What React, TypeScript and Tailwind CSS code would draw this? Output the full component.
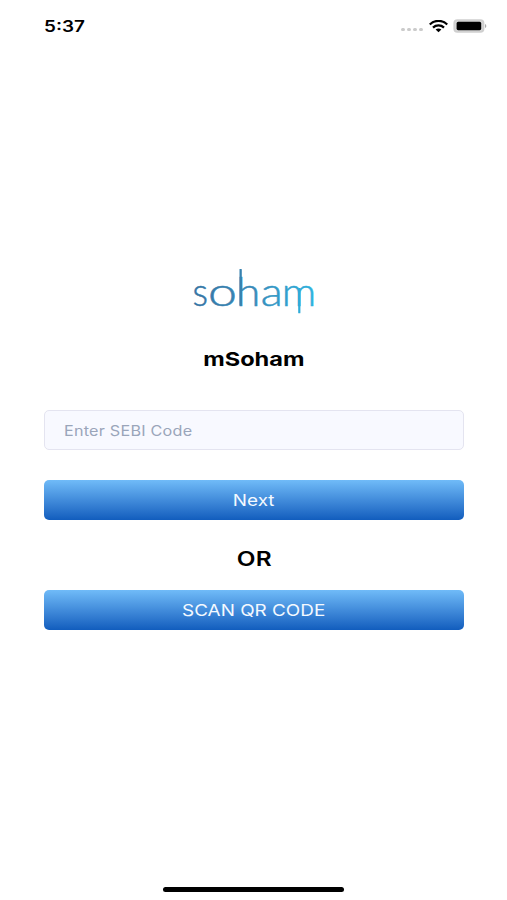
import { useState } from "react";

const letters = [
  { char: "s", x: 192.6, width: 15.5 },
  { char: "o", x: 208, width: 29 },
  { char: "h", x: 236.3, width: 24 },
  { char: "a", x: 260.8, width: 22 },
  { char: "m", x: 281.8, width: 34.5 },
];

function Logo() {
  return (
    <svg width="130" height="50" viewBox="189 266 130 50" role="img" aria-label="soham">
      <defs>
        <linearGradient id="brand" gradientUnits="userSpaceOnUse" x1="193" y1="0" x2="315" y2="0">
          <stop offset="0" stopColor="#3474a3" />
          <stop offset="0.5" stopColor="#388bb9" />
          <stop offset="1" stopColor="#2cb2de" />
        </linearGradient>
      </defs>
      <g
        fill="url(#brand)"
        stroke="url(#brand)"
        strokeWidth="0.5"
        className="font-['Lato'] font-light text-[39px]"
      >
        {letters.map((l) => (
          <text key={l.char} x={l.x} y="305.5" textLength={l.width} lengthAdjust="spacingAndGlyphs">
            {l.char}
          </text>
        ))}
      </g>
      {/* long stems on the h and the m */}
      <rect x="239.5" y="269" width="2.3" height="36.7" rx="0.6" fill="#3682b0" />
      <rect x="298.2" y="288" width="2.2" height="25.3" rx="0.6" fill="#2fabd8" />
    </svg>
  );
}

function StatusBar() {
  return (
    <div className="flex h-[52px] items-center justify-between pl-[43.5px] pr-[20.5px]">
      <span className="origin-left scale-x-[1.22] pt-px text-[15.5px] font-semibold">5:37</span>
      <div className="flex items-center">
        <div className="mr-[6px] mt-[7px] flex gap-[2px]">
          {[1, 2, 3, 4].map((n) => (
            <span key={n} className="h-[3.5px] w-[4px] rounded-full bg-[#cbcbcb]" />
          ))}
        </div>
        <svg width="19" height="13" viewBox="0 0 19 13" fill="none" stroke="#000" strokeWidth="2.3">
          <path d="M0.8 4.5C5.8-.3 13.2-.3 18.2 4.5" />
          <path d="M4 7.6C7.1 4.7 11.9 4.7 15 7.6" />
          <path d="M6.6 9.5C8.3 8 10.7 8 12.4 9.5L9.5 12.2Z" fill="#000" stroke="none" />
        </svg>
        <svg className="ml-[5px]" width="34" height="14" viewBox="0 0 34 14">
          <rect x="1.2" y="1" width="29.4" height="12" rx="3.2" fill="#d6d6d6" stroke="#cfcfcf" strokeWidth="1.6" />
          <rect x="3.6" y="2.8" width="24.6" height="8.4" rx="1.6" fill="#000" />
          <path d="M32 5C33.8 5.7 33.8 8.3 32 9Z" fill="#aaa" />
        </svg>
      </div>
    </div>
  );
}

function GradientButton({ children }: { children: React.ReactNode }) {
  return (
    <button
      type="button"
      className="flex h-10 w-full items-center justify-center rounded-[5px] bg-linear-to-b from-[#70bbf8] to-[#115dbd] text-[16px] text-[#f4f9ff]"
    >
      <span className="scale-x-[1.18]">{children}</span>
    </button>
  );
}

export default function App() {
  const [code, setCode] = useState("");

  return (
    <div className="flex h-[900px] w-[507px] flex-col bg-white font-['Inter',sans-serif] text-black">
      <StatusBar />

      <main className="flex flex-1 flex-col items-center pl-[43.5px] pr-[43px] pt-[214px]">
        <Logo />
        <h1 className="mt-[28px] scale-x-[1.24] text-[19px] font-bold leading-8">mSoham</h1>

        <div className="mt-[34px] h-10 w-full rounded-[5px] border-[1.5px] border-[#e4e4f0] bg-[#f8f9ff] pl-[19px]">
          <input
            className="h-full w-[300px] origin-left scale-x-[1.155] text-[14px] tracking-[0.2px] outline-none placeholder:text-[#9aa5ba]"
            placeholder="Enter SEBI Code"
            value={code}
            onChange={(e) => setCode(e.target.value)}
          />
        </div>

        <div className="mt-[30px] w-full">
          <GradientButton>Next</GradientButton>
        </div>
        <p className="mb-[15px] mt-[23px] scale-x-[1.22] text-[20px] font-semibold leading-8">OR</p>
        <GradientButton>SCAN QR CODE</GradientButton>
      </main>

      {/* Home indicator */}
      <div className="mx-auto mb-[8px] h-[5px] w-[181px] rounded-full bg-black" />
    </div>
  );
}
